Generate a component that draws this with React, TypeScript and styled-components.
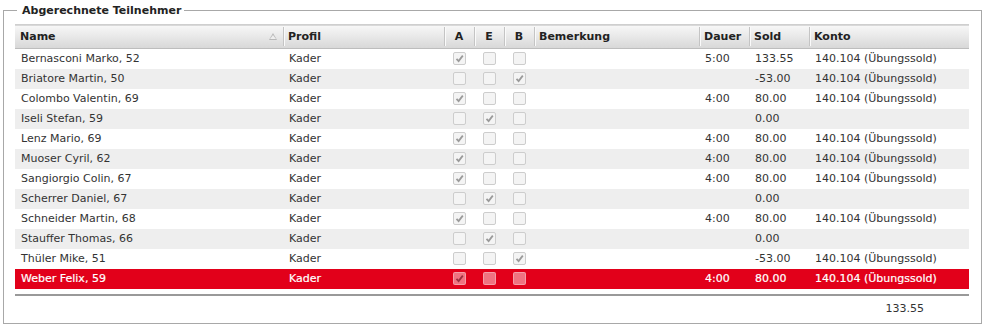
import styled, { createGlobalStyle } from "styled-components";

const GlobalStyle = createGlobalStyle`
  body {
    margin: 0;
    background: #fff;
    font-family: "DejaVu Sans", Verdana, sans-serif;
    font-size: 11px;
    color: #333;
  }
`;

const Panel = styled.fieldset`
  margin: 4px 0 0 3px;
  width: 979px;
  height: 320px;
  box-sizing: border-box;
  border: 1px solid #a8a8a8;
  padding: 7px 12px 0 11px;
`;

const Legend = styled.legend`
  margin-left: 2px;
  padding: 0 3px 0 5px;
  font-weight: bold;
  color: #222;
  font-size: 11px;
`;

const Table = styled.table`
  width: 954px;
  table-layout: fixed;
  border-collapse: collapse;
`;

const HeadRow = styled.tr`
  height: 24px;
  background: linear-gradient(#f7f7f7, #e6e6e6 55%, #d8d8d8);
  border-top: 1px solid #cfcfcf;
  border-bottom: 1px solid #bdbdbd;
`;

const HeadCell = styled.th<{ $center?: boolean }>`
  position: relative;
  padding: 0 5px;
  text-align: ${(p) => (p.$center ? "center" : "left")};
  font-weight: bold;
  color: #222;
  white-space: nowrap;
  &:not(:first-child)::before {
    content: "";
    position: absolute;
    left: 0;
    top: 2px;
    bottom: 2px;
    width: 1px;
    background: #c4c4c4;
    box-shadow: 1px 0 0 #fafafa;
  }
`;

const SortMark = styled.span`
  position: absolute;
  right: 6px;
  top: 8px;
  width: 0;
  height: 0;
  border-left: 4px solid transparent;
  border-right: 4px solid transparent;
  border-bottom: 7px solid #b8b8b8;
  &::after {
    content: "";
    position: absolute;
    left: -3px;
    top: 2px;
    border-left: 3px solid transparent;
    border-right: 3px solid transparent;
    border-bottom: 4px solid #eee;
  }
`;

const Row = styled.tr<{ $striped: boolean; $selected: boolean }>`
  height: 20px;
  background: ${(p) =>
    p.$selected ? "#e2001a" : p.$striped ? "#eeeeee" : "#ffffff"};
  color: ${(p) => (p.$selected ? "#fff" : "#333")};
  -webkit-text-stroke: ${(p) => (p.$selected ? "0.2px #fff" : "0")};
`;

const Cell = styled.td<{ $center?: boolean }>`
  padding: 0 5px 0 6px;
  text-align: ${(p) => (p.$center ? "center" : "left")};
  white-space: nowrap;
  overflow: hidden;
  line-height: 20px;
`;

const Check = styled.span<{ $selected: boolean }>`
  display: inline-block;
  vertical-align: middle;
  width: 11px;
  height: 11px;
  border-radius: 2px;
  border: 1px solid ${(p) => (p.$selected ? "rgba(255,255,255,0.3)" : "#cdcdcd")};
  background: ${(p) => (p.$selected ? "rgba(255,255,255,0.45)" : "#f4f4f4")};
  margin-top: -2px;
  svg {
    display: block;
  }
`;

const Footer = styled.div`
  width: 954px;
  border-top: 2px solid #999;
  margin-top: 5px;
  height: 26px;
  display: flex;
  align-items: center;
  justify-content: flex-end;
  padding-right: 45px;
  box-sizing: border-box;
`;

type Participant = {
  name: string;
  a: boolean;
  e: boolean;
  b: boolean;
  dauer: string;
  sold: string;
  konto: string;
};

const konto = "140.104 (Übungssold)";

const rows: Participant[] = [
  { name: "Bernasconi Marko, 52", a: true, e: false, b: false, dauer: "5:00", sold: "133.55", konto },
  { name: "Briatore Martin, 50", a: false, e: false, b: true, dauer: "", sold: "-53.00", konto },
  { name: "Colombo Valentin, 69", a: true, e: false, b: false, dauer: "4:00", sold: "80.00", konto },
  { name: "Iseli Stefan, 59", a: false, e: true, b: false, dauer: "", sold: "0.00", konto: "" },
  { name: "Lenz Mario, 69", a: true, e: false, b: false, dauer: "4:00", sold: "80.00", konto },
  { name: "Muoser Cyril, 62", a: true, e: false, b: false, dauer: "4:00", sold: "80.00", konto },
  { name: "Sangiorgio Colin, 67", a: true, e: false, b: false, dauer: "4:00", sold: "80.00", konto },
  { name: "Scherrer Daniel, 67", a: false, e: true, b: false, dauer: "", sold: "0.00", konto: "" },
  { name: "Schneider Martin, 68", a: true, e: false, b: false, dauer: "4:00", sold: "80.00", konto },
  { name: "Stauffer Thomas, 66", a: false, e: true, b: false, dauer: "", sold: "0.00", konto: "" },
  { name: "Thüler Mike, 51", a: false, e: false, b: true, dauer: "", sold: "-53.00", konto },
  { name: "Weber Felix, 59", a: true, e: false, b: false, dauer: "4:00", sold: "80.00", konto },
];

const selectedIndex = 11;

const Tick = ({ on, selected }: { on: boolean; selected: boolean }) => (
  <Check $selected={selected}>
    {on && (
      <svg width="11" height="11" viewBox="0 0 11 11">
        <path
          d="M2.5 5.8 L4.6 8 L8.8 2.6"
          fill="none"
          stroke={selected ? "#9a3040" : "#9a9a9a"}
          strokeWidth="1.8"
        />
      </svg>
    )}
  </Check>
);

export default function App() {
  return (
    <>
      <GlobalStyle />
      <Panel>
        <Legend>Abgerechnete Teilnehmer</Legend>
        <Table>
          <colgroup>
            <col style={{ width: 268 }} />
            <col style={{ width: 161 }} />
            <col style={{ width: 30 }} />
            <col style={{ width: 30 }} />
            <col style={{ width: 30 }} />
            <col style={{ width: 165 }} />
            <col style={{ width: 50 }} />
            <col style={{ width: 60 }} />
            <col style={{ width: 160 }} />
          </colgroup>
          <thead>
            <HeadRow>
              <HeadCell>
                Name
                <SortMark />
              </HeadCell>
              <HeadCell>Profil</HeadCell>
              <HeadCell $center>A</HeadCell>
              <HeadCell $center>E</HeadCell>
              <HeadCell $center>B</HeadCell>
              <HeadCell>Bemerkung</HeadCell>
              <HeadCell>Dauer</HeadCell>
              <HeadCell>Sold</HeadCell>
              <HeadCell>Konto</HeadCell>
            </HeadRow>
          </thead>
          <tbody>
            {rows.map((r, i) => {
              const sel = i === selectedIndex;
              return (
                <Row key={r.name} $striped={i % 2 === 1} $selected={sel}>
                  <Cell>{r.name}</Cell>
                  <Cell>Kader</Cell>
                  <Cell $center>
                    <Tick on={r.a} selected={sel} />
                  </Cell>
                  <Cell $center>
                    <Tick on={r.e} selected={sel} />
                  </Cell>
                  <Cell $center>
                    <Tick on={r.b} selected={sel} />
                  </Cell>
                  <Cell />
                  <Cell>{r.dauer}</Cell>
                  <Cell>{r.sold}</Cell>
                  <Cell>{r.konto}</Cell>
                </Row>
              );
            })}
          </tbody>
        </Table>
        <Footer>133.55</Footer>
      </Panel>
    </>
  );
}
